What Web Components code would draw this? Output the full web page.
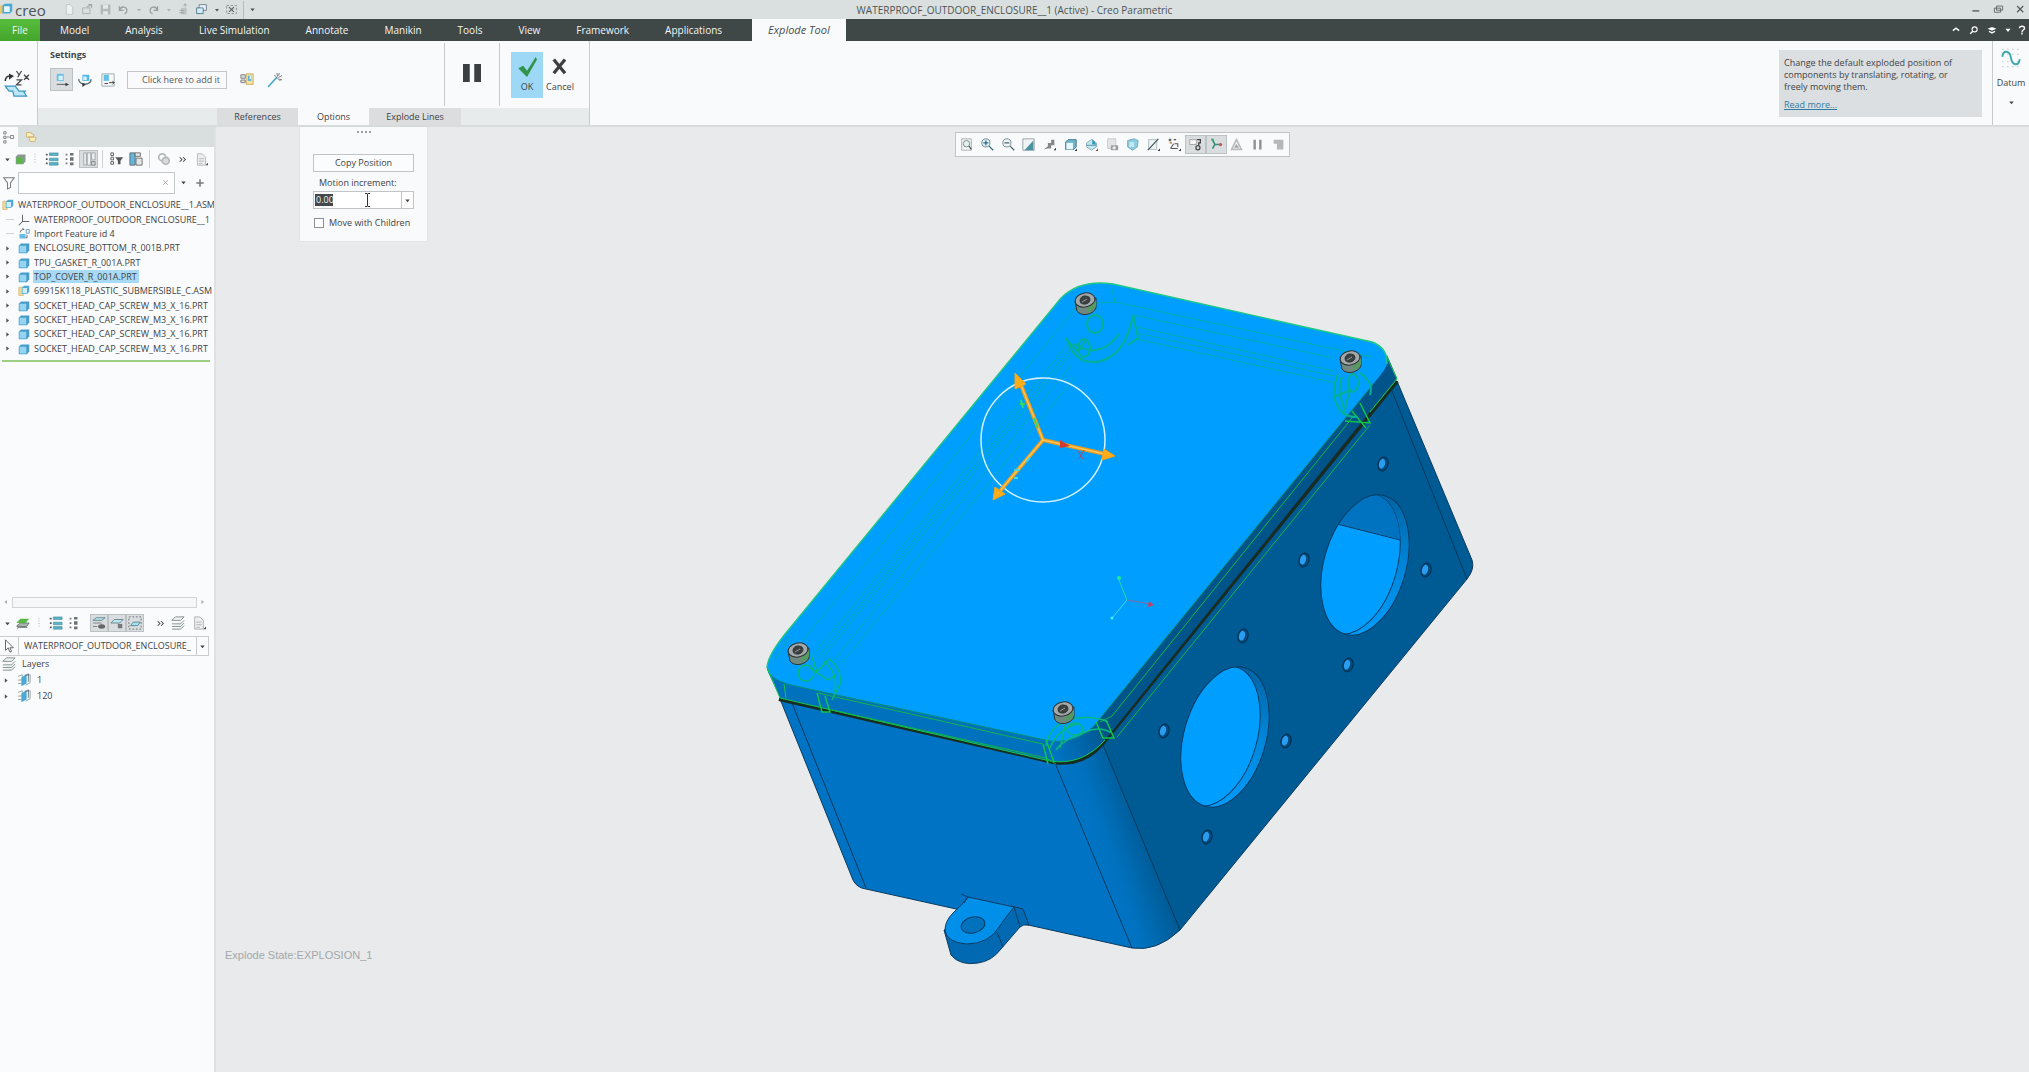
<!DOCTYPE html>
<html lang="en">
<head>
<meta charset="utf-8">
<title>WATERPROOF_OUTDOOR_ENCLOSURE__1 (Active) - Creo Parametric</title>
<style>
    html, body {
        height: 100%;
        margin: 0;
    }
    body {
        font: 9px/14px "Open Sans", "Noto Sans", sans-serif;
        color: #3f4345;
        background: #e8eaeb;
        overflow: hidden;
    }
</style>
</head>
<body>
<creo-app></creo-app>

<script>
const ICONS = {
    logo: '<path d="M0 3h4v10H0z" fill="#e9c66b"/><path d="M3 3l3-2h9v9l-3 3H3z" fill="#48a9d6"/><path d="M5 4h7v7H5z" fill="#e8f6fc"/>',
    newfile: '<path d="M4 2h5l3 3v9H4z" fill="#edf0f0" stroke="#bcc3c3"/>',
    open: '<path d="M2 6h9v7H2z" fill="none" stroke="#a4abab"/><path d="M7 5l6-3M9 2h4v4" fill="none" stroke="#8d9595"/>',
    save: '<path d="M2 2h12v12H2z" fill="#b2b9b9"/><path d="M5 2h6v5H5zM5 10h6v4H5z" fill="#e4e8e8"/>',
    undo: '<path d="M3 4v5h5M3 9c2-6 10-5 9 1 0 2-2 3-3 3" fill="none" stroke="#979f9f" stroke-width="1.6"/>',
    redo: '<path d="M13 4v5H8M13 9C11 3 3 4 4 10c0 2 2 3 3 3" fill="none" stroke="#979f9f" stroke-width="1.6"/>',
    regen: '<path d="M5 6h7v8H5z" fill="#bcc3c3"/><path d="M10 5V1m-2 2l2-2 2 2M3 9h6M3 12h6" fill="none" stroke="#959c9c"/>',
    windows: '<path d="M5 2h9v7H5z" fill="#eef" stroke="#5d7480"/><path d="M2 6h8v7H2z" fill="#d4eef7" stroke="#3f6d80"/>',
    closewin: '<path d="M2 3h12v10H2z" fill="none" stroke="#7c8486" stroke-dasharray="3 2"/><path d="M5 5l6 6M11 5l-6 6" stroke="#5a6062" stroke-width="1.5"/>',
    down: '<path d="M4 6h8l-4 5z" fill="currentColor"/>',
    right: '<path d="M5 4l5 4-5 4z" fill="currentColor"/>',
    left: '<path d="M10 4L5 8l5 4z" fill="currentColor"/>',
    minimize: '<path d="M2 10h10" stroke="#555c5e" stroke-width="2"/>',
    restore: '<path d="M5 3h9v6H5zM2 6h9v6H2z" fill="#dbe0e0" stroke="#5c6466" stroke-width="1.3"/>',
    close: '<path d="M3 3l9 9M12 3l-9 9" stroke="#555c5e" stroke-width="1.8"/>',
    caretup: '<path d="M3 9l5-4 5 4" fill="none" stroke="#fff" stroke-width="2.4"/>',
    find: '<circle cx="9" cy="7" r="4" fill="none" stroke="#fff" stroke-width="1.8"/><path d="M6 10l-4 4" stroke="#fff" stroke-width="2.2"/>',
    learn: '<path d="M1 6l7-3 7 3-7 3z" fill="#fff"/><path d="M3 9l5 2 5-2v2l-5 3-5-3z" fill="#fff"/>',
    help: '<path d="M4 5c0-4 8-4 8 0 0 3-4 3-4 6M8 12v3" fill="none" stroke="#fff" stroke-width="2.2"/>',
    explode: '<path d="M1 8c0-3 2-4 4-4" fill="none" stroke="#333" stroke-width="1.3"/><path d="M4 2l4 2-4 3z" fill="#333"/><path d="M10 0l2 3M14 0l-3 5M10 7h4l-4 4h4M16 3l4 4M20 3l-4 4" fill="none" stroke="#444"/><path d="M1 12h8l3 4h5l-1 1 2 3H8l-1-4H4z" fill="#bfe6f6" stroke="#3a96c0"/>',
    translate: '<path d="M2 1h8v8H2z" fill="#62bfe8"/><path d="M4 3h5v5H4z" fill="#d5f1fc"/><path d="M2 13h11" fill="none" stroke="#555"/><path d="M12 11l4 2-4 2z" fill="#333"/>',
    rotate: '<path d="M5 2h8v7H5z" fill="#55b7e4"/><path d="M6 4h4v4H6z" fill="#d5f1fc"/><path d="M1 7c-1 7 14 8 14 0" fill="none" stroke="#4a6672" stroke-width="1.5"/><path d="M5 11l4 2-4 3z" fill="#333"/>',
    viewplane: '<path d="M1 1h14v14H1z" fill="#f7f9fa" stroke="#9aa4a8"/><path d="M3 2h6v7H3z" fill="#62bfe8"/><path d="M9 11h6l-2-2m2 2l-2 2M4 12h4" fill="none" stroke="#333"/>',
    explodeline: '<path d="M1 2h5v4H1zM1 8h5v3H1z" fill="#ddd" stroke="#777"/><path d="M7 1h8v12H7z" fill="#f4e0a2" stroke="#c8a95d"/><path d="M9 3h4v6H9z" fill="#58b3df"/><path d="M11 3h2v4h-2z" fill="#e3f6fd"/>',
    wand: '<path d="M0 16L10 5" stroke="#4ba7cc" stroke-width="1.8"/><path d="M9 4l5 5M10 0l1 4M16 3l-4 2M7 2l2 2M13 0l-1 3M13 7l3 1" stroke="#666" stroke-width="1"/>',
    pause: '<path d="M0 0h6v16H0zM10 0h6v16h-6z" fill="#3c3f41"/>',
    ok: '<path d="M1 9l4-2 3 4L15 0l1 2-8 14z" fill="#31944a"/>',
    cancel: '<path d="M3 2l9 11M12 2L3 13" stroke="#3c3f41" stroke-width="2.6"/>',
    datum: '<path d="M1 1h14M1 5h14M1 11h14M1 15h14" stroke="#9da5a8" stroke-width=".6" stroke-dasharray="1 3"/><path d="M1 7c1-6 6-5 7 1s6 7 7 1" fill="none" stroke="#3da9ae" stroke-width="1.5"/>',
    treetab: '<path d="M1 1h3v3H1zM1 7h3v3H1zM1 13h3v3H1zM10 6h4v4h-4zM5 8h4" fill="none" stroke="#666"/>',
    foldertab: '<path d="M2 2h6l1 2 3 1-1 3H2zM5 8h7l3 1-2 5H7z" fill="#f7ebc0" stroke="#c9a95f"/>',
    cubegreen: '<path d="M1 5l3-3h10v9l-3 4H1z" fill="#8c9893"/><path d="M2 6h8v8H2z" fill="#54bb3f"/>',
    griplist: '<path d="M8 2v12" stroke="#9ba3a5" stroke-dasharray="1 2"/>',
    listblue: '<path d="M1 3h2M1 8h2M1 13h2" stroke="#555" stroke-width="2"/><path d="M5 1h10v3H5zM5 7h10v3H5zM5 12h10v3H5z" fill="#55b3c8" stroke="#3f8093" stroke-width=".6"/>',
    list: '<path d="M3 3h2M3 8h2M3 13h2" stroke="#777" stroke-width="2"/><path d="M8 1h4v3H8zM8 6h4v4H8zM8 12h4v3H8z" fill="#6c7375"/>',
    columns: '<path d="M2 1h3v14H2zM6 1h4v14H6zM11 1h4v8h-4z" fill="#edf0f0" stroke="#9ca3a5"/><path d="M11 11h4v4h-4z" fill="none" stroke="#777"/>',
    treefilter: '<path d="M1 1h3v3H1zM1 6h3v3H1zM1 11h3v3H1z" fill="none" stroke="#555"/><path d="M6 6h9l-3 4v4h-3v-4z" fill="#555"/>',
    treecols: '<path d="M1 1h6v14H1z" fill="#63b7dd" stroke="#666"/><path d="M7 1h6v4H7zM8 7h7v8H8z" fill="#e3e6e7" stroke="#666"/>',
    rings: '<circle cx="6" cy="6" r="4" fill="none" stroke="#b4babb" stroke-width="2"/><circle cx="10" cy="10" r="4" fill="#d8dbdc" stroke="#b4babb" stroke-width="2"/>',
    more: '<path d="M3 4l4 4-4 4M9 4l4 4-4 4" fill="none" stroke="#444" stroke-width="1.8"/>',
    page: '<path d="M3 1h6l4 4v10H3z" fill="#eceeef" stroke="#aaafb1"/><path d="M5 7h6M5 10h6M5 13h4" stroke="#aaafb1"/><path d="M13 15l3-3v3z" fill="#444"/>',
    funnel: '<path d="M1 1h14l-5 7v6l-4 2V8z" fill="none" stroke="#777e80" stroke-width="1.4"/>',
    clear: '<path d="M4 4l8 8M12 4l-8 8" stroke="#888" stroke-width="1.3"/>',
    plus: '<path d="M8 2v12M2 8h12" stroke="#777c7e" stroke-width="2.4"/>',
    asm: '<path d="M1 3h6v11H1z" fill="#f0d99a" stroke="#c9a557" stroke-width=".7"/><path d="M5 4l3-3h7v8l-3 3H5z" fill="#4fa9d3"/><path d="M6 4h6v7H6z" fill="#cdeefa"/>',
    part: '<path d="M1 5l3-3h11v9l-3 4H1z" fill="#489cca"/><path d="M2 5h9v9H2z" fill="#95d5f2"/>',
    csys: '<path d="M6 1v9h9M6 10l-5 5" fill="none" stroke="#666" stroke-width="1.4"/>',
    imported: '<path d="M2 8h8v6H2z" fill="#62bce4"/><path d="M11 2h4v5h-4z" fill="none" stroke="#478fb3"/><path d="M3 6c0-3 2-4 5-4l-2-2M12 9v4h-2" fill="none" stroke="#444"/>',
    layersgreen: '<path d="M1 11l4-3h10l-3 4H1zM1 14l3-1h9" fill="#aab2ae" stroke="#69736d"/><path d="M1 7l4-4h10l-4 5H1z" fill="#5ab944"/>',
    layers: '<path d="M1 5l4-4h10l-4 4zM1 9h10l4-4M1 12h10l4-4M1 15h10l4-4" fill="#eef3f4" stroke="#7b8688"/>',
    layershow: '<path d="M1 5l4-3h10l-4 3z" fill="#bce7f1" stroke="#5f8087"/><path d="M1 8h10M1 12h5" stroke="#777"/><ellipse cx="11" cy="12" rx="4" ry="2.5" fill="#666"/>',
    layerfind: '<path d="M1 8l4-4h10l-4 4z" fill="#bce7f1" stroke="#5f8087"/><path d="M9 9h5v5H9z" fill="#777"/>',
    layersel: '<path d="M1 1h14v14H1z" fill="none" stroke="#666" stroke-dasharray="2 2"/><path d="M3 11l3-4h8l-3 4z" fill="#a9e3f2" stroke="#4b7f8e"/>',
    cursor: '<path d="M4 1v12l3-3 2 5 2-1-2-4h4z" fill="#fff" stroke="#555"/>',
    layeritem: '<path d="M1 4l5-2v3M1 8h5M1 12h5M10 3l5-1v9l-5 3" fill="none" stroke="#8b999d"/><path d="M5 5l6-4v11l-6 3z" fill="#4ba9d4"/><path d="M9 3l4-2v9" fill="none" stroke="#62757c"/>',
    refit: '<path d="M2 1h12v14H2z" fill="#f4f6f6" stroke="#9ba2a4"/><circle cx="8" cy="7" r="4" fill="#e6f0f3" stroke="#68777c"/><path d="M11 10l3 4" stroke="#555" stroke-width="1.6"/>',
    zoomin: '<circle cx="6" cy="6" r="5" fill="#d9eff7" stroke="#68777c"/><path d="M3 6h6M6 3v6M10 10l5 5" stroke="#356c80" stroke-width="1.6"/>',
    zoomout: '<circle cx="6" cy="6" r="5" fill="#eef4f6" stroke="#68777c"/><path d="M3 6h6M10 10l5 5" stroke="#4c656e" stroke-width="1.6"/>',
    repaint: '<path d="M1 1h14v14H1z" fill="#eef3f4" stroke="#8c979a"/><path d="M3 15L14 3v12z" fill="#4b93a0"/>',
    render: '<path d="M1 14l5-4V6h4V2h4v7h-4v4H6z" fill="#838889"/><path d="M13 15l3-3v3z" fill="#333"/>',
    shade: '<path d="M2 5l3-3h10v9l-3 3H2z" fill="#6fb5cc" stroke="#356c80"/><path d="M3 6h8v8H3z" fill="#e9f8fd"/><path d="M13 16l3-3v3z" fill="#333"/>',
    saved: '<path d="M2 6l6-4 6 4v5l-6 4-6-4z" fill="#c3e8f2" stroke="#7ba2ae"/><path d="M9 1l5 7H9z" fill="#2e9aba"/><path d="M2 9h12" stroke="#4b8796"/><path d="M13 16l3-3v3z" fill="#a33"/>',
    manager: '<path d="M2 1h10v12H2z" fill="#e3e5e6" stroke="#c3c8ca"/><path d="M6 9h9v6H6z" fill="#999fa1"/><circle cx="10" cy="12" r="2" fill="#eee"/>',
    persp: '<path d="M2 3l8-2 5 2-1 8-6 4-6-4z" fill="#8dcbdf" stroke="#6fa5b8"/><path d="M4 5h6v6H4z" fill="#c2eaf5"/>',
    section: '<path d="M2 2h10v12H2z" fill="#eef4f5" stroke="#a7b1b4"/><path d="M1 15L14 1" stroke="#3f5960" stroke-width="1.5"/><path d="M13 16l3-3v3z" fill="#333"/>',
    datums: '<path d="M1 1l3 3M4 1L1 4M7 2h3M8 7h4v4M3 13l4-6M4 13h8" fill="none" stroke="#555" stroke-width="1.3"/><path d="M2 6h3" stroke="#c94" stroke-width="2"/><path d="M13 16l3-3v3z" fill="#333"/>',
    annot: '<path d="M1 2h8v6H1z" fill="#fafafa" stroke="#999"/><path d="M10 2h4v4h-3M12 6v3" fill="none" stroke="#444" stroke-width="1.5"/><circle cx="11" cy="12" r="2.5" fill="none" stroke="#444" stroke-width="1.5"/>',
    spin: '<path d="M3 2l3 6-3 5M6 8h8" fill="none" stroke="#3b8f77" stroke-width="2"/><circle cx="13" cy="8" r="2" fill="#c55"/><circle cx="3" cy="2" r="1.5" fill="#3a6"/>',
    warn: '<path d="M8 2l6 12H2z" fill="none" stroke="#b6babb" stroke-width="2"/><path d="M5 12l6 0-3-5z" fill="#9fa4a6"/>',
    pausegray: '<path d="M3 2h3v12H3zM10 2h3v12h-3z" fill="#8e9395"/>',
    stop: '<path d="M2 2h12v12H6V7H2z" fill="#b4b8ba"/>'
};

class CreoIcon extends HTMLElement {
    connectedCallback() {
        const box = this.getAttribute('box') || '16 16';
        this.attachShadow({ mode: 'open' }).innerHTML = `
            <style>
                :host {
                    display: inline-flex;
                    flex: none;
                    width: var(--icon-size, 14px);
                    height: var(--icon-size, 14px);
                }
                svg {
                    width: 100%;
                    height: 100%;
                    overflow: visible;
                }
            </style>
            <svg viewBox="0 0 ${box}" aria-hidden="true">${ICONS[this.getAttribute('name')]}</svg>
        `;
    }
}
customElements.define('creo-icon', CreoIcon);

// square icon button, "pressed" gives it the grey toggled look
class CreoTool extends HTMLElement {
    connectedCallback() {
        const name = this.getAttribute('icon');
        this.attachShadow({ mode: 'open' }).innerHTML = `
            <style>
                :host {
                    display: flex;
                    flex: none;
                    width: 18px;
                    height: 18px;
                }
                button {
                    display: flex;
                    flex: 1;
                    align-items: center;
                    justify-content: center;
                    padding: 0;
                    border: 0;
                    background: none;
                    color: inherit;
                }
                :host([pressed]) button {
                    background: #d9dddf;
                    box-shadow: inset 0 0 0 1px #bcc2c4;
                }
            </style>
            <button type="button" aria-label="${name}"><creo-icon name="${name}"></creo-icon></button>
        `;
    }
}
customElements.define('creo-tool', CreoTool);

class CreoTitlebar extends HTMLElement {
    connectedCallback() {
        this.attachShadow({ mode: 'open' }).innerHTML = `
            <style>
                :host {
                    display: grid;
                    grid-template-columns: 1fr auto 1fr;
                    align-items: center;
                    height: 19px;
                    background: #d9e0df;
                    color: #4e5456;
                    font-size: 10px;
                }
                div {
                    display: flex;
                    align-items: center;
                }
                .brand {
                    font-size: 15px;
                    margin: 0 15px 0 2px;
                }
                .small {
                    width: 12px;
                    --icon-size: 8px;
                }
                .sep {
                    width: 1px;
                    height: 18px;
                    margin-left: 2px;
                    background: #b4bbbb;
                }
                .win {
                    justify-content: flex-end;
                    gap: 4px;
                    --icon-size: 11px;
                }
                .quick {
                    --icon-size: 13px;
                }
            </style>
            <div class="quick">
                <creo-icon name="logo"></creo-icon>
                <span class="brand">creo</span>
                <creo-tool icon="newfile"></creo-tool>
                <creo-tool icon="open"></creo-tool>
                <creo-tool icon="save"></creo-tool>
                <creo-tool icon="undo"></creo-tool>
                <creo-tool icon="down" class="small" style="color:#aab1b1"></creo-tool>
                <creo-tool icon="redo"></creo-tool>
                <creo-tool icon="down" class="small" style="color:#aab1b1"></creo-tool>
                <creo-tool icon="regen"></creo-tool>
                <creo-tool icon="windows"></creo-tool>
                <creo-tool icon="down" class="small"></creo-tool>
                <creo-tool icon="closewin"></creo-tool>
                <span class="sep"></span>
                <creo-tool icon="down" style="--icon-size:9px"></creo-tool>
            </div>
            <span>WATERPROOF_OUTDOOR_ENCLOSURE__1 (Active) - Creo Parametric</span>
            <div class="win">
                <creo-tool icon="minimize"></creo-tool>
                <creo-tool icon="restore"></creo-tool>
                <creo-tool icon="close"></creo-tool>
            </div>
        `;
    }
}
customElements.define('creo-titlebar', CreoTitlebar);

class CreoTabs extends HTMLElement {
    connectedCallback() {
        const tabs = ['Model', 'Analysis', 'Live Simulation', 'Annotate', 'Manikin', 'Tools', 'View', 'Framework', 'Applications'];
        this.attachShadow({ mode: 'open' }).innerHTML = `
            <style>
                :host {
                    display: flex;
                    height: 22px;
                    background: #3f4747;
                    font-size: 10px;
                }
                nav {
                    display: flex;
                }
                button {
                    padding: 0 18px;
                    border: 0;
                    background: none;
                    color: #f4f6f6;
                    font: inherit;
                }
                .file {
                    width: 40px;
                    margin-right: 2px;
                    padding: 0;
                    background: linear-gradient(#58bd3c, #43a52b);
                }
                .active {
                    background: #f8fafb;
                    color: #4a4e50;
                    font-size: 11px;
                    font-style: italic;
                    padding: 0 16px;
                    margin-left: 12px;
                }
                .aside {
                    display: flex;
                    align-items: center;
                    margin-left: auto;
                    --icon-size: 10px;
                    color: #fff;
                }
            </style>
            <nav>
                <button class="file">File</button>
                ${tabs.map(t => `<button>${t}</button>`).join('')}
                <button class="active">Explode Tool</button>
            </nav>
            <div class="aside">
                <creo-tool icon="caretup"></creo-tool>
                <creo-tool icon="find"></creo-tool>
                <creo-tool icon="learn"></creo-tool>
                <creo-tool icon="down" style="width:14px"></creo-tool>
                <creo-tool icon="help" style="width:14px"></creo-tool>
            </div>
        `;
    }
}
customElements.define('creo-tabs', CreoTabs);

class CreoRibbon extends HTMLElement {
    connectedCallback() {
        this.attachShadow({ mode: 'open' }).innerHTML = `
            <style>
                :host {
                    display: flex;
                    height: 86px;
                    background: #f8fafb;
                    border-bottom: 2px solid #d8dcdd;
                    box-sizing: border-box;
                }
                .mode {
                    display: flex;
                    align-items: center;
                    width: 38px;
                    padding-left: 4px;
                    box-sizing: border-box;
                    border-right: 1px solid #c6cbcd;
                    --icon-size: 25px;
                }
                .dash {
                    display: flex;
                    flex-direction: column;
                    width: 552px;
                    border-right: 1px solid #c6cbcd;
                    box-sizing: border-box;
                }
                .groups {
                    display: flex;
                    flex: 1;
                }
                .settings {
                    flex: 1;
                    padding: 7px 12px 0;
                }
                h2 {
                    margin: 0 0 6px;
                    font-size: 9px;
                    font-weight: 700;
                }
                .row {
                    display: flex;
                    align-items: center;
                }
                .row creo-tool {
                    width: 23px;
                    height: 23px;
                }
                .row input {
                    width: 100px;
                    height: 18px;
                    margin: 0 8px 0 8px;
                    padding: 0 0 0 14px;
                    box-sizing: border-box;
                    border: 1px solid #c3c6ca;
                    background: #fafafc;
                    color: #55595b;
                    font: inherit;
                }
                .row input::placeholder {
                    color: inherit;
                }
                .row .last {
                    margin-left: 5px;
                }
                .pause, .confirm {
                    display: flex;
                    align-items: center;
                    justify-content: center;
                    margin: 2px 0;
                    border-left: 1px solid #c6cbcd;
                    box-sizing: border-box;
                }
                .pause {
                    width: 55px;
                }
                .confirm {
                    width: 90px;
                    padding: 0 11px;
                    justify-content: flex-start;
                }
                .confirm button {
                    display: flex;
                    flex-direction: column;
                    align-items: center;
                    justify-content: center;
                    gap: 3px;
                    height: 46px;
                    width: 34px;
                    padding: 2px 0 0;
                    border: 0;
                    background: none;
                    color: inherit;
                    font: inherit;
                    --icon-size: 20px;
                }
                .pause button {
                    padding: 0;
                    border: 0;
                    background: none;
                    --icon-size: 18px;
                }
                .confirm .ok {
                    width: 32px;
                    background: #9dd8f6;
                }
                .panels {
                    display: flex;
                    height: 17px;
                    padding-left: 179px;
                    background: #e8ebec;
                }
                .panels button {
                    width: 81px;
                    padding: 0;
                    border: 0;
                    background: #dbdddf;
                    color: inherit;
                    font: inherit;
                }
                .panels .open {
                    width: 71px;
                    background: #f8fafb;
                }
                .panels .wide {
                    width: 92px;
                }
                .tip {
                    width: 203px;
                    height: 67px;
                    margin: 9px 10px 0 auto;
                    padding: 7px 5px;
                    box-sizing: border-box;
                    background: #dcdfe1;
                    line-height: 12px;
                }
                .tip p {
                    margin: 0 0 6px;
                    padding-right: 20px;
                }
                a {
                    color: #2b7da6;
                }
                .datum {
                    display: flex;
                    flex-direction: column;
                    align-items: center;
                    gap: 8px;
                    width: 37px;
                    padding: 7px 0 0;
                    border: 0;
                    border-left: 1px solid #c6cbcd;
                    background: none;
                    color: inherit;
                    font: inherit;
                    --icon-size: 20px;
                }
            </style>
            <div class="mode"><creo-icon name="explode" box="20 20"></creo-icon></div>
            <div class="dash">
                <div class="groups">
                    <section class="settings">
                        <h2>Settings</h2>
                        <div class="row">
                            <creo-tool icon="translate" pressed></creo-tool>
                            <creo-tool icon="rotate"></creo-tool>
                            <creo-tool icon="viewplane"></creo-tool>
                            <input placeholder="Click here to add it" aria-label="Components to move">
                            <creo-tool icon="explodeline"></creo-tool>
                            <creo-tool icon="wand" class="last"></creo-tool>
                        </div>
                    </section>
                    <div class="pause"><button aria-label="Pause"><creo-icon name="pause"></creo-icon></button></div>
                    <div class="confirm">
                        <button class="ok"><creo-icon name="ok"></creo-icon>OK</button>
                        <button><creo-icon name="cancel"></creo-icon>Cancel</button>
                    </div>
                </div>
                <div class="panels">
                    <button>References</button>
                    <button class="open">Options</button>
                    <button class="wide">Explode Lines</button>
                </div>
            </div>
            <aside class="tip">
                <p>Change the default exploded position of components by translating, rotating, or freely moving them.</p>
                <a href="#help">Read more...</a>
            </aside>
            <button class="datum">
                <creo-icon name="datum"></creo-icon>
                Datum
                <creo-icon name="down" style="--icon-size:9px"></creo-icon>
            </button>
        `;
    }
}
customElements.define('creo-ribbon', CreoRibbon);

class CreoOptions extends HTMLElement {
    connectedCallback() {
        this.attachShadow({ mode: 'open' }).innerHTML = `
            <style>
                :host {
                    display: flex;
                    flex-direction: column;
                    width: 127px;
                    height: 114px;
                    padding: 0 13px;
                    box-sizing: border-box;
                    background: #f8fafb;
                    box-shadow: 0 0 1px #c3c8ca;
                }
                .grip {
                    align-self: center;
                    width: 14px;
                    height: 2px;
                    margin: 4px 0 21px;
                    background: repeating-linear-gradient(90deg, #9a9fa1 0 2px, transparent 2px 4px);
                }
                .copy {
                    height: 18px;
                    padding: 0;
                    border: 1px solid #c0c4c6;
                    background: #fbfcfd;
                    color: inherit;
                    font: inherit;
                }
                label {
                    padding: 4px 0 1px 6px;
                }
                .combo {
                    display: flex;
                    height: 18px;
                    box-sizing: border-box;
                    border: 1px solid #c0c4c6;
                    background: #fff;
                }
                .combo input {
                    flex: 1;
                    min-width: 0;
                    padding: 0 2px;
                    border: 0;
                    outline: 0;
                    font: inherit;
                    background: linear-gradient(#45484b, #45484b) 1px 2px / 18px 12px no-repeat #fff;
                    color: #f4f4f4;
                }
                .combo button {
                    display: flex;
                    align-items: center;
                    width: 12px;
                    padding: 0 1px;
                    border: 0;
                    border-left: 1px solid #c0c4c6;
                    background: none;
                    color: #444;
                    --icon-size: 9px;
                }
                .beam {
                    align-self: center;
                    width: 7px;
                    height: 14px;
                    margin-right: 30px;
                    stroke: #333;
                    fill: none;
                }
                .check {
                    display: flex;
                    align-items: center;
                    gap: 5px;
                    padding: 7px 0 0 1px;
                    white-space: nowrap;
                }
                .check input {
                    appearance: none;
                    width: 10px;
                    height: 10px;
                    margin: 0;
                    border: 1px solid #8b9092;
                    background: #fff;
                }
            </style>
            <span class="grip"></span>
            <button class="copy">Copy Position</button>
            <label for="inc">Motion increment:</label>
            <div class="combo">
                <input id="inc" value="0.00">
                <svg class="beam" viewBox="0 0 7 14"><path d="M1 .5h2l.5 1 .5-1h2M3.500 1v12M1 13.500h2l.5-1 .5 1h2"/></svg>
                <button aria-label="Recent values"><creo-icon name="down"></creo-icon></button>
            </div>
            <label class="check"><input type="checkbox">Move with Children</label>
        `;
    }
}
customElements.define('creo-options', CreoOptions);

class CreoTree extends HTMLElement {
    connectedCallback() {
        const rows = [
            ['csys', 'WATERPROOF_OUTDOOR_ENCLOSURE__1'],
            ['imported', 'Import Feature id 4'],
            ['part', 'ENCLOSURE_BOTTOM_R_001B.PRT', 1],
            ['part', 'TPU_GASKET_R_001A.PRT', 1],
            ['part', 'TOP_COVER_R_001A.PRT', 1, 1],
            ['asm', '69915K118_PLASTIC_SUBMERSIBLE_C.ASM', 1],
            ['part', 'SOCKET_HEAD_CAP_SCREW_M3_X_16.PRT', 1],
            ['part', 'SOCKET_HEAD_CAP_SCREW_M3_X_16.PRT', 1],
            ['part', 'SOCKET_HEAD_CAP_SCREW_M3_X_16.PRT', 1],
            ['part', 'SOCKET_HEAD_CAP_SCREW_M3_X_16.PRT', 1]
        ];
        this.attachShadow({ mode: 'open' }).innerHTML = `
            <style>
                :host {
                    display: flex;
                    flex-direction: column;
                    height: 45%;
                    min-height: 481px;
                }
                .tabs {
                    display: flex;
                    height: 20px;
                    background: #d8dfde;
                    gap: 4px;
                    --icon-size: 12px;
                }
                .tabs creo-tool {
                    height: 20px;
                }
                .tabs creo-tool:first-child {
                    background: #fafbfc;
                }
                .bar {
                    display: flex;
                    align-items: center;
                    height: 24px;
                }
                .bar creo-tool {
                    width: 19px;
                }
                .bar .slim {
                    width: 14px;
                }
                .sep {
                    width: 1px;
                    height: 18px;
                    margin: 0 4px;
                    background: #ccd1d3;
                }
                .search {
                    display: flex;
                    align-items: center;
                    height: 23px;
                    --icon-size: 12px;
                }
                .field {
                    display: flex;
                    align-items: center;
                    width: 157px;
                    height: 22px;
                    box-sizing: border-box;
                    border: 1px solid #c3c8ca;
                    background: #fff;
                    --icon-size: 9px;
                }
                .field input {
                    flex: 1;
                    min-width: 0;
                    border: 0;
                    background: none;
                    font: inherit;
                }
                ul {
                    display: grid;
                    grid-auto-rows: 1fr;
                    height: 158px;
                    margin: 4px 4px 4px 2px;
                    padding: 0;
                    list-style: none;
                    white-space: nowrap;
                    border-bottom: 2px solid #9bcf84;
                    padding-bottom: 4px;
                }
                li {
                    display: flex;
                    align-items: center;
                    gap: 4px;
                    --icon-size: 12px;
                }
                li .arrow {
                    width: 12px;
                    color: #555;
                    --icon-size: 9px;
                }
                li .stub {
                    width: 8px;
                    margin-left: 4px;
                    border-top: 1px solid #d0d4d6;
                }
                .sel {
                    padding: 0 2px 0 1px;
                    margin-left: -1px;
                    background: #a9daf5;
                    line-height: 13px;
                }
                .hscroll {
                    display: flex;
                    align-items: center;
                    height: 12px;
                    margin: auto 5px 0 0;
                    color: #a5abad;
                    --icon-size: 8px;
                }
                .hscroll span {
                    flex: 1;
                    height: 9px;
                    border: 1px solid #d0d4d6;
                    background: #f6f7f8;
                }
                .hscroll creo-tool {
                    width: 12px;
                    height: 12px;
                }
            </style>
            <div class="tabs"><creo-tool icon="treetab"></creo-tool><creo-tool icon="foldertab"></creo-tool></div>
            <div class="bar">
                <creo-tool icon="down" class="slim" style="--icon-size:9px"></creo-tool>
                <creo-tool icon="cubegreen" class="slim" style="--icon-size:12px"></creo-tool>
                <creo-tool icon="griplist" class="slim"></creo-tool>
                <creo-tool icon="listblue"></creo-tool>
                <creo-tool icon="list" style="width:18px"></creo-tool>
                <creo-tool icon="columns" pressed></creo-tool>
                <span class="sep"></span>
                <creo-tool icon="treefilter"></creo-tool>
                <creo-tool icon="treecols"></creo-tool>
                <span class="sep"></span>
                <creo-tool icon="rings"></creo-tool>
                <creo-tool icon="more" style="--icon-size:9px"></creo-tool>
                <creo-tool icon="page" style="--icon-size:13px"></creo-tool>
            </div>
            <div class="search">
                <creo-tool icon="funnel"></creo-tool>
                <div class="field"><input aria-label="Search tree"><creo-tool icon="clear"></creo-tool></div>
                <creo-tool icon="down" style="--icon-size:9px;width:16px"></creo-tool>
                <creo-tool icon="plus" style="--icon-size:10px"></creo-tool>
            </div>
            <ul>
                <li class="root"><creo-icon name="asm"></creo-icon>WATERPROOF_OUTDOOR_ENCLOSURE__1.ASM</li>
                ${rows.map(([icon, text, arrow, sel]) => `
                    <li>${arrow ? '<creo-icon class="arrow" name="right"></creo-icon>' : '<span class="stub"></span>'}<creo-icon name="${icon}"></creo-icon><span class="${sel ? 'sel' : ''}">${text}</span></li>
                `).join('')}
            </ul>
            <div class="hscroll"><creo-tool icon="left"></creo-tool><span></span><creo-tool icon="right"></creo-tool></div>
        `;
    }
}
customElements.define('creo-tree', CreoTree);

class CreoLayers extends HTMLElement {
    connectedCallback() {
        this.attachShadow({ mode: 'open' }).innerHTML = `
            <style>
                :host {
                    display: block;
                    padding-top: 5px;
                }
                .bar, .pick {
                    display: flex;
                    align-items: center;
                    margin-right: 5px;
                }
                .bar {
                    height: 20px;
                }
                .bar .slim {
                    width: 14px;
                }
                .bar .first {
                    margin-left: 7px;
                }
                .pick {
                    height: 20px;
                    margin-top: 3px;
                    border: 1px solid #c9cdcf;
                    border-left: 0;
                    box-sizing: border-box;
                }
                select {
                    flex: 1;
                    min-width: 0;
                    height: 18px;
                    padding: 0 5px;
                    appearance: none;
                    border: 0;
                    border-left: 1px solid #c9cdcf;
                    border-right: 1px solid #c9cdcf;
                    border-radius: 0;
                    background: #fbfcfd;
                    color: inherit;
                    font: inherit;
                }
                .pick creo-icon {
                    margin: 0 1px;
                    --icon-size: 9px;
                }
                ul {
                    margin: 0;
                    padding: 0;
                    list-style: none;
                }
                li {
                    display: flex;
                    align-items: center;
                    gap: 6px;
                    height: 16px;
                    padding-left: 2px;
                }
                li .arrow {
                    width: 9px;
                    color: #555;
                    --icon-size: 9px;
                }
            </style>
            <div class="bar">
                <creo-tool icon="down" class="slim" style="--icon-size:9px"></creo-tool>
                <creo-tool icon="layersgreen"></creo-tool>
                <creo-tool icon="griplist" class="slim" style="width:8px"></creo-tool>
                <creo-tool icon="listblue" class="first"></creo-tool>
                <creo-tool icon="list"></creo-tool>
                <creo-tool icon="layershow" class="first" pressed></creo-tool>
                <creo-tool icon="layerfind" pressed></creo-tool>
                <creo-tool icon="layersel" pressed></creo-tool>
                <creo-tool icon="more" class="first" style="--icon-size:9px"></creo-tool>
                <creo-tool icon="layers"></creo-tool>
                <creo-tool icon="page" style="margin-left:3px"></creo-tool>
            </div>
            <div class="pick">
                <creo-tool icon="cursor"></creo-tool>
                <select aria-label="Layer model"><option>WATERPROOF_OUTDOOR_ENCLOSURE_</option></select>
                <creo-icon name="down"></creo-icon>
            </div>
            <ul>
                <li><creo-icon name="layers"></creo-icon>Layers</li>
                <li><creo-icon class="arrow" name="right"></creo-icon><creo-icon name="layeritem"></creo-icon>1</li>
                <li><creo-icon class="arrow" name="right"></creo-icon><creo-icon name="layeritem"></creo-icon>120</li>
            </ul>
        `;
    }
}
customElements.define('creo-layers', CreoLayers);

class CreoModel extends HTMLElement {
    connectedCallback() {
        const screw = ([x, y]) => `
            <g transform="translate(${x} ${y})" stroke="#2d3433" stroke-width="1">
                <path d="M-10 1l2 10c4 6 16 4 19-3V-2z" fill="#6f8880"/>
                <path d="M3 12c4-1 7-3 8-6V0c-2 4-5 6-8 7z" fill="#569a60" stroke="none"/>
                <ellipse rx="10" ry="7" fill="#a3a9ab" transform="rotate(-12)"/>
                <ellipse rx="5" ry="4" fill="#3b4041" transform="rotate(-12)"/>
                <path d="M-3 2l5-3" stroke="#959b9d"/>
            </g>`;
        const small = [[1383, 464], [1304, 560], [1426, 570], [1348, 665], [1243, 636], [1164, 731], [1286, 741], [1207, 837]];
        const smallHole = ([x, y]) => `
            <g transform="translate(${x} ${y}) rotate(16)">
                <ellipse rx="5" ry="7" fill="#004a7d" stroke="#06304f"/>
                <ellipse cx="-1" rx="3" ry="5" fill="#2a9df0"/>
            </g>`;
        const bigHole = (x, y, id, wedge) => `
            <clipPath id="${id}"><ellipse rx="41" ry="72" transform="translate(${x} ${y}) rotate(16)"/></clipPath>
            <g clip-path="url(#${id})">
                <path d="M${x - 60} ${y - 80}h120v160h-120z" fill="url(#rim)"/>
                <ellipse rx="41" ry="72" transform="translate(${x - 9} ${y - 1}) rotate(16)" fill="#009fff" stroke="#073d66"/>
                ${wedge}
            </g>
            <ellipse rx="41" ry="72" transform="translate(${x} ${y}) rotate(16)" fill="none" stroke="#073d66"/>`;
        this.attachShadow({ mode: 'open' }).innerHTML = `
            <style>
                :host {
                    display: block;
                    height: 100%;
                }
                svg {
                    display: block;
                    width: 100%;
                    height: 100%;
                }
            </style>
            <svg viewBox="216 127 1813 945" role="img" aria-label="Enclosure model">
                <defs>
                    <linearGradient id="corner" gradientUnits="userSpaceOnUse" x1="1085" y1="840" x2="1142" y2="820">
                        <stop offset="0" stop-color="#0074c5"/><stop offset=".35" stop-color="#0071be"/><stop offset="1" stop-color="#005a94"/>
                    </linearGradient>
                    <linearGradient id="covercorner" gradientUnits="userSpaceOnUse" x1="1055" y1="750" x2="1112" y2="730">
                        <stop offset="0" stop-color="#0073c2"/><stop offset="1" stop-color="#005489"/>
                    </linearGradient>
                    <linearGradient id="rim" x1="0" y1="0" x2="0" y2="1">
                        <stop offset="0" stop-color="#005f9e"/><stop offset=".5" stop-color="#0085d8"/><stop offset="1" stop-color="#009fff"/>
                    </linearGradient>
                    <clipPath id="in1"><ellipse rx="41" ry="72" transform="translate(1356 564) rotate(16)"/></clipPath>
                </defs>

                <!-- box bottom -->
                <g stroke="#0b3a5c" stroke-width="1" stroke-linejoin="round">
                    <path d="M780 699L853 880Q857 888 866 889L1132 948L1150 860L1057 750Z" fill="#0073c4"/>
                    <path d="M1090 740L1397 381L1472 560Q1475 569 1467 579L1180 930Z" fill="#005a93"/>
                    <path d="M1055 763Q1085 766 1103 745L1180 930Q1157 952 1132 948Z" fill="url(#corner)"/>
                    <path d="M792 703L866 888M1392 391L1467 579" fill="none"/>
                </g>
                ${small.map(smallHole).join('')}
                ${bigHole(1365, 565, 'h1', '<g clip-path="url(#in1)"><path d="M1300 480h130v67L1337 524L1300 515Z" fill="#0073c0"/><path d="M1325 521L1412 543" stroke="#073d66"/></g>')}
                ${bigHole(1225, 737, 'h2', '')}

                <!-- mounting ear -->
                <g stroke="#0a3d63" stroke-width="1">
                    <path d="M944 930L951 955Q960 966 978 963Q992 961 1001 949L1020 927Q1023 924 1029 925L1023 909L1012 906Z" fill="#0069b2"/>
                    <path d="M968 897L1014 907Q1005 918 999 927Q989 944 966 944Q946 942 945 930Q945 921 953 913Q963 904 968 897Z" fill="#0090ea"/>
                    <path d="M961 894L968 897L964 903M1014 907L1020 927M997 932L1003 947" fill="none"/>
                    <ellipse cx="973" cy="925" rx="12" ry="8" fill="#0071bd" transform="rotate(-14 973 925)"/>
                </g>

                <!-- gasket -->
                <path d="M779 699L1053 762Q1083 767 1103 743L1397 381" fill="none" stroke="#182c24" stroke-width="4"/>

                <!-- cover -->
                <path d="M768 672L780 698L1050 761L1062 735Z" fill="#0071bd"/>
                <path d="M1090 718L1105 740L1397 378L1387 355Z" fill="#005489"/>
                <path d="M1046 735L1050 761Q1082 766 1105 740L1095 712Z" fill="url(#covercorner)"/>
                <path d="M767 667Q768 654 790 628L1061 298Q1080 279 1113 284L1372 342Q1388 348 1387 364Q1386 369 1374 383L1102 716Q1083 744 1050 741L800 687Q768 681 767 667Z" fill="#009fff"/>

                <!-- highlighted cover edges -->
                <g fill="none" stroke="#12bd6c" stroke-width="1">
                    <path d="M767 667Q768 654 790 628L1061 298Q1080 279 1113 284L1372 342Q1388 348 1387 364" stroke="#1fc884" stroke-width="1.400"/>
                    <path d="M1374 383L1102 716Q1083 744 1050 741L800 687Q768 681 767 667" stroke="#078f74"/>
                    <path d="M767 667L780 698L1050 761Q1082 766 1105 740M1387 357L1397 379L1370 412M784 684L786 698" stroke="#14c84c"/>
                    <path d="M818 693L1043 744M832 710L1046 758L1056 764M1352 418L1112 716L1100 722M1370 425L1117 737" stroke="#12b548"/>
                    <path d="M817 693L822 712L830 712L825 696M1043 744L1048 764M1046 740L1054 762M1096 722L1103 738L1114 738L1106 720M1360 403L1370 423L1345 421M1352 411L1366 428" stroke="#10c44a" stroke-width="1.500"/>
                </g>
                <!-- hidden edges seen through the top face -->
                <g fill="none" stroke="#00b094" stroke-width="1" opacity=".75">
                    <path d="M803 640L1079 304M812 656L1068 344M818 657L1070 349M822 658L1070 355M834 660L1072 364M841 664L1076 376"/>
                    <path d="M1111 285L1115 302L1372 357M1133 315L1334 358M1137 327L1334 371M1137 333L1334 376M1137 339L1336 383"/>
                    <path d="M775 660L790 636M1074 304L1115 302"/>
                </g>
                <g fill="none" stroke="#04b092" stroke-width="2">
                    <path d="M1068 340Q1073 363 1096 362Q1125 358 1133 315L1138 338L1128 345M1065 338L1078 352L1086 340M1074 344Q1100 360 1119 334"/>
                    <ellipse cx="1095" cy="324" rx="8" ry="9"/>
                    <ellipse cx="1084" cy="348" rx="6" ry="9"/>
                    <path d="M1338 374Q1330 392 1337 405Q1343 418 1358 417M1342 377Q1336 390 1345 411M1360 373Q1374 382 1370 395M1334 397L1350 390L1344 412"/>
                    <ellipse cx="1353" cy="383" rx="5" ry="9"/>
                </g>
                <g fill="none" stroke="#08b87c" stroke-width="1.500">
                    <ellipse cx="806" cy="673" rx="8" ry="8"/>
                    <path d="M812 657L817 672L829 659Q842 668 840 684L832 700M823 661Q838 671 835 692M810 668L828 680L836 674"/>
                    <ellipse cx="1075" cy="729" rx="8" ry="6"/>
                    <path d="M1046 746Q1050 722 1077 718Q1096 716 1108 722M1050 748Q1058 728 1080 723M1056 750Q1062 740 1088 731Q1100 726 1112 733M1060 748L1066 722"/>
                </g>
                ${[[1085, 300], [1350, 358], [798, 650], [1063, 709]].map(screw).join('')}

                <!-- drag handle triad -->
                <circle cx="1043" cy="440" r="62" fill="none" stroke="#d5f1ff" stroke-width="1.500"/>
                <g stroke="#e79a1f" stroke-width="4" fill="#ffae1a">
                    <path d="M1043 440L1019 380M1043 440L1105 454M1043 440L1000 491" fill="none"/>
                    <path d="M1043 440L1019 380M1043 440L1105 454M1043 440L1000 491" fill="none" stroke="#ffc655" stroke-width="1.500"/>
                    <path d="M1015 373L1026 384L1015 389ZM1115 456L1102 460L1104 449ZM993 500L995 487L1005 494Z" stroke="#f2a21a" stroke-width="1"/>
                </g>
                <path d="M1038 428L1034 418M1021 400L1023 408M1020 404h5" stroke="#35d96a" stroke-width="2"/>
                <path d="M1030 457L1026 462M1014 470h6M1014 478h4" stroke="#45d9e4" stroke-width="2"/>
                <path d="M1060 440L1070 446L1060 448Z" fill="#d33a2d"/>
                <path d="M1078 451l5 8M1084 450l-5 9" stroke="#b9485e" stroke-width="1"/>

                <!-- model csys -->
                <g fill="none" stroke-width="1">
                    <path d="M1127 600L1119 580" stroke="#25dca0"/><circle cx="1119" cy="578" r="2" fill="#1df08c"/>
                    <path d="M1127 600L1150 604" stroke="#8668a4"/><path d="M1149 601l5 4-6 2z" fill="#c8405a"/>
                    <path d="M1127 600L1113 617" stroke="#3fd6ea"/><circle cx="1112" cy="618" r="1.500" fill="#48f0ea"/>
                </g>
            </svg>
        `;
    }
}
customElements.define('creo-model', CreoModel);

class CreoViewport extends HTMLElement {
    connectedCallback() {
        const tools = ['refit', 'zoomin', 'zoomout', 'repaint', 'render', 'shade', 'saved', 'manager', 'persp', 'section', 'datums', 'annot', 'spin', 'warn', 'pausegray', 'stop'];
        this.attachShadow({ mode: 'open' }).innerHTML = `
            <style>
                :host {
                    position: relative;
                    display: block;
                    background: #e8eaeb;
                }
                /* the three below float over the model */
                .tools {
                    position: absolute;
                    top: 5px;
                    left: 0;
                    right: 0;
                    display: flex;
                    width: 333px;
                    height: 23px;
                    margin: 0 auto;
                    align-items: center;
                    border: 1px solid #bfc4c6;
                    background: #f8fafb;
                    --icon-size: 13px;
                }
                .tools creo-tool {
                    flex: 1;
                    height: 19px;
                }
                creo-options {
                    position: absolute;
                    top: 0;
                    left: 84px;
                }
                .state {
                    position: absolute;
                    left: 9px;
                    bottom: 110px;
                    font: 11px/14px "Liberation Sans", Arial, sans-serif;
                    color: #a4a7a9;
                }
            </style>
            <creo-model></creo-model>
            <div class="tools">
                ${tools.map(t => `<creo-tool icon="${t}" ${t === 'annot' || t === 'spin' ? 'pressed' : ''}></creo-tool>`).join('')}
            </div>
            <creo-options></creo-options>
            <span class="state">Explode State:EXPLOSION_1</span>
        `;
    }
}
customElements.define('creo-viewport', CreoViewport);

class CreoApp extends HTMLElement {
    connectedCallback() {
        this.attachShadow({ mode: 'open' }).innerHTML = `
            <style>
                :host {
                    display: flex;
                    flex-direction: column;
                    height: 100vh;
                }
                main {
                    display: flex;
                    flex: 1;
                    min-height: 0;
                }
                aside {
                    width: 214px;
                    flex: none;
                    border-right: 2px solid #dfe2e4;
                    background: #fafbfc;
                    overflow: hidden;
                }
                creo-viewport {
                    flex: 1;
                    min-width: 0;
                }
            </style>
            <creo-titlebar></creo-titlebar>
            <creo-tabs></creo-tabs>
            <creo-ribbon></creo-ribbon>
            <main>
                <aside>
                    <creo-tree></creo-tree>
                    <creo-layers></creo-layers>
                </aside>
                <creo-viewport></creo-viewport>
            </main>
        `;
    }
}
customElements.define('creo-app', CreoApp);
</script>
</body>
</html>
